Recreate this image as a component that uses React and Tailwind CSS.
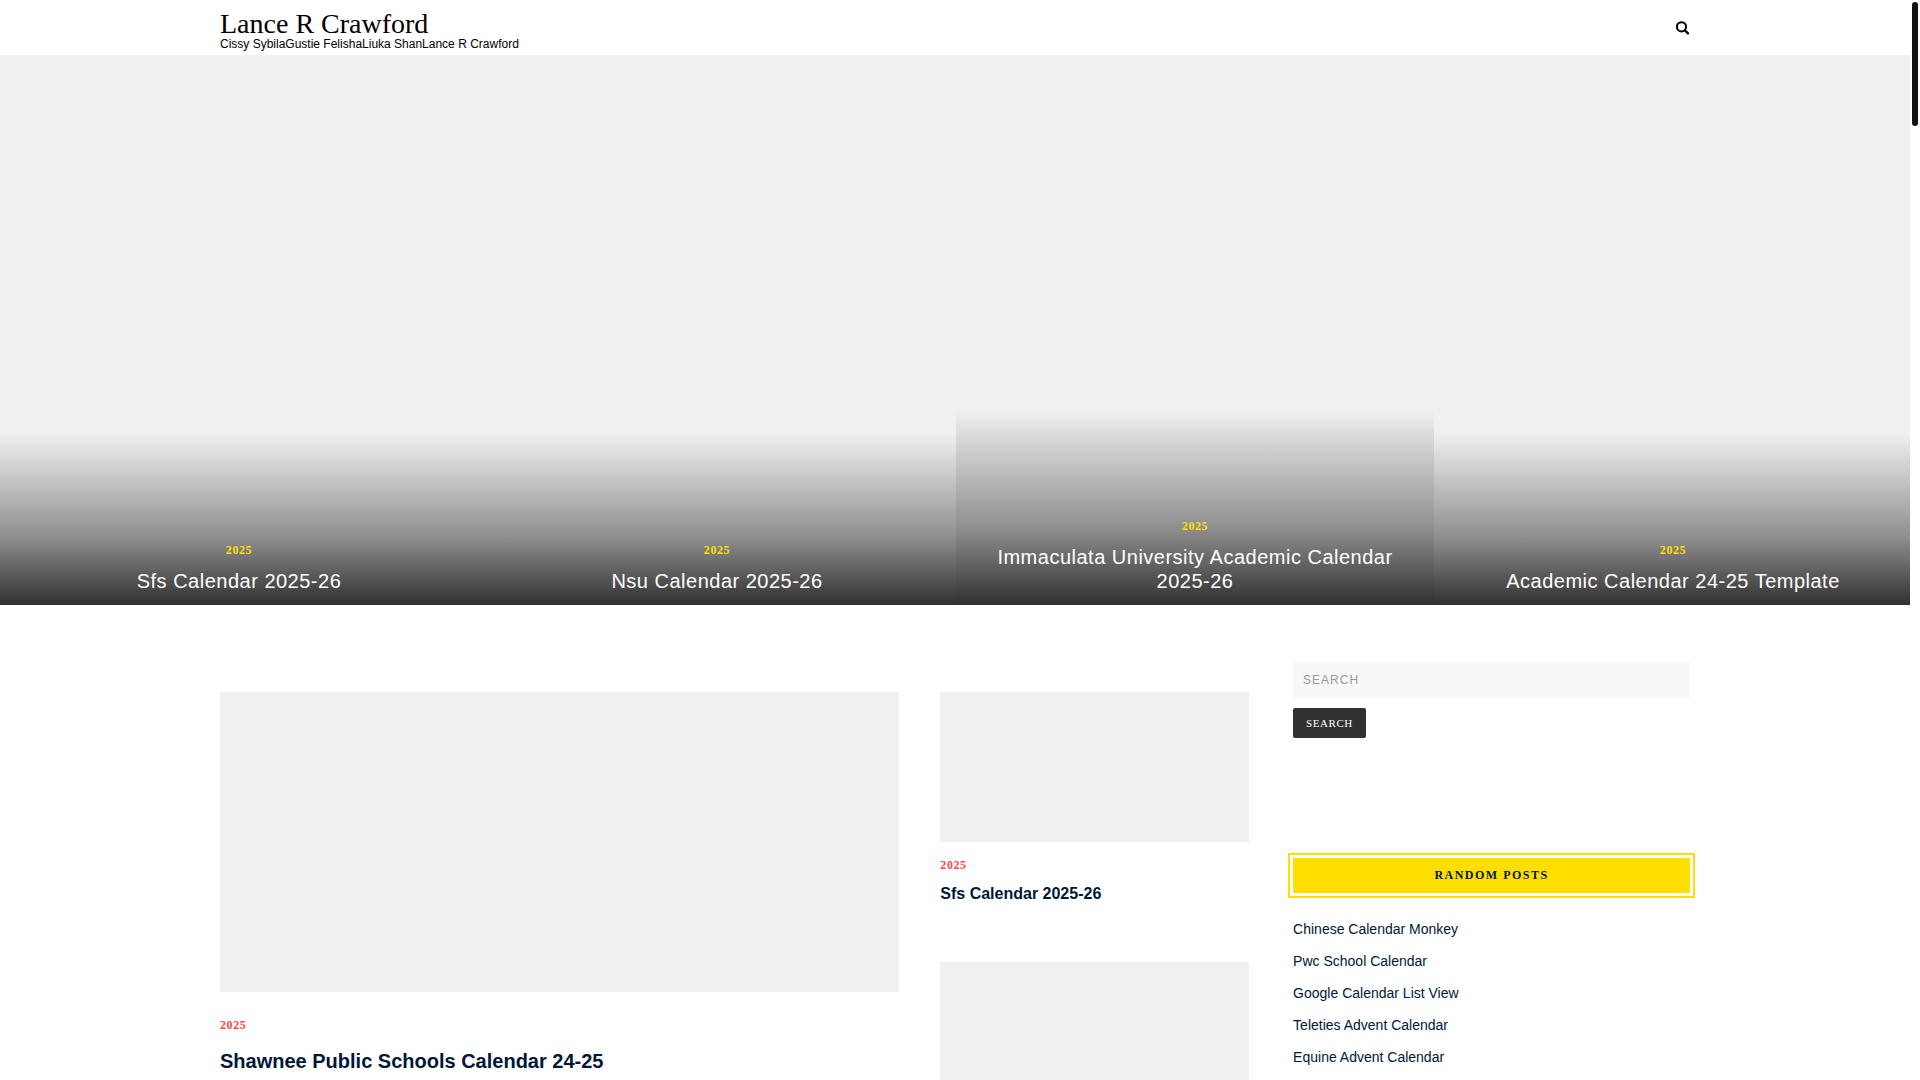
const slides = [
  { category: '2025', title: 'Sfs Calendar 2025-26' },
  { category: '2025', title: 'Nsu Calendar 2025-26' },
  { category: '2025', title: 'Immaculata University Academic Calendar 2025-26' },
  { category: '2025', title: 'Academic Calendar 24-25 Template' }
];

const randomPosts = [
  'Chinese Calendar Monkey',
  'Pwc School Calendar',
  'Google Calendar List View',
  'Teleties Advent Calendar',
  'Equine Advent Calendar'
];

function SearchIcon() {
  return (
    <svg className="h-[14px] w-[14px]" viewBox="0 0 14 14" fill="none" stroke="currentColor" strokeWidth="2" aria-hidden="true">
      <circle cx="5.5" cy="5.8" r="4.6" />
      <path d="M8.8 9.2 12 12.4" strokeWidth="2.3" strokeLinecap="round" />
    </svg>
  );
}

function Category({ label, className }) {
  return (
    <a
      className={`block font-['Liberation_Serif',serif] text-[12px] font-bold leading-[18px] tracking-wider ${className}`}
      href="#category"
    >
      {label}
    </a>
  );
}

function Header() {
  return (
    <header className="bg-white">
      <div className="mx-auto flex h-[55px] w-full max-w-[1470px] items-center justify-between">
        <div className="pt-1 text-black">
          <h1 className="font-['Liberation_Serif',serif] text-[28px] leading-[28px]">
            <a href="#home">Lance R Crawford</a>
          </h1>
          <p className="text-[12px] leading-[12px]">Cissy SybilaGustie FelishaLiuka ShanLance R Crawford</p>
        </div>
        <button className="text-black" type="button" aria-label="Open search">
          <SearchIcon />
        </button>
      </div>
    </header>
  );
}

function Slide({ slide }) {
  return (
    <article className="flex h-full flex-1 items-end bg-[#f0f0f0]">
      <div className="w-full bg-[linear-gradient(to_bottom,rgba(0,0,0,0)_0%,rgba(0,0,0,0.4)_60%,rgba(0,0,0,0.8)_100%)] px-8 pt-[108px] pb-3 text-center">
        <Category label={slide.category} className="text-[#ffde00]" />
        <h2 className="mt-[10px] text-[20px] leading-[24px] tracking-wide text-white">
          <a href="#post">{slide.title}</a>
        </h2>
      </div>
    </article>
  );
}

function Sidebar() {
  return (
    <aside className="w-[27%] pt-[57px]">
      <form onSubmit={(event) => event.preventDefault()}>
        <input
          className="block h-9 w-full bg-[#f7f7f7] px-[10px] text-[12px] tracking-[1px] outline-none placeholder:text-[#999]"
          type="search"
          aria-label="Search"
          placeholder="SEARCH"
        />
        <button
          className="mt-[10px] h-[30px] rounded-[2px] bg-[#313131] px-[13px] font-['Liberation_Serif',serif] text-[11px] tracking-wider text-white"
          type="submit"
        >
          SEARCH
        </button>
      </form>

      <section className="mt-[120px]">
        <h3 className="bg-[#ffde00] text-center font-['Liberation_Serif',serif] text-[12px] font-bold leading-[35px] tracking-[0.125em] outline-2 outline-offset-3 outline-[#ffde00]">
          RANDOM POSTS
        </h3>
        <ul className="mt-[25px] space-y-[10px] text-[14px] leading-[22px]">
          {randomPosts.map((post) => (
            <li key={post}>
              <a href="#post">{post}</a>
            </li>
          ))}
        </ul>
      </section>
    </aside>
  );
}

export default function App() {
  return (
    <div className="relative h-screen overflow-hidden bg-white pr-[10px] font-['Liberation_Sans',Arial,sans-serif] text-[#001737]">
      <Header />

      <section className="h-[550px] overflow-hidden" aria-label="Featured posts">
        <div className="-mr-[2px] flex h-full">
          {slides.map((slide) => (
            <Slide key={slide.title} slide={slide} />
          ))}
        </div>
      </section>

      <div className="mx-auto flex w-full max-w-[1470px] items-start justify-between">
        <main className="flex w-[70%] items-start justify-between pt-[87px]">
          <article className="w-[66%]">
            <div className="h-[300px] bg-[#f0f0f0]" />
            <Category label="2025" className="mt-6 text-[#ff4545]" />
            <h2 className="mt-[14px] text-[20px] font-bold leading-[26px]">
              <a href="#post">Shawnee Public Schools Calendar 24-25</a>
            </h2>
          </article>

          <div className="w-[30%]">
            <article>
              <div className="h-[150px] bg-[#f0f0f0]" />
              <Category label="2025" className="mt-[14px] text-[#ff4545]" />
              <h2 className="mt-[10px] text-[16px] font-bold leading-[20px]">
                <a href="#post">Sfs Calendar 2025-26</a>
              </h2>
            </article>
            <article className="mt-[58px]">
              <div className="h-[150px] bg-[#f0f0f0]" />
            </article>
          </div>
        </main>

        <Sidebar />
      </div>

      {/* scrollbar thumb */}
      <div className="absolute top-[2px] right-[2px] h-[124px] w-[6px] rounded-full bg-[#111]" />
    </div>
  );
}
